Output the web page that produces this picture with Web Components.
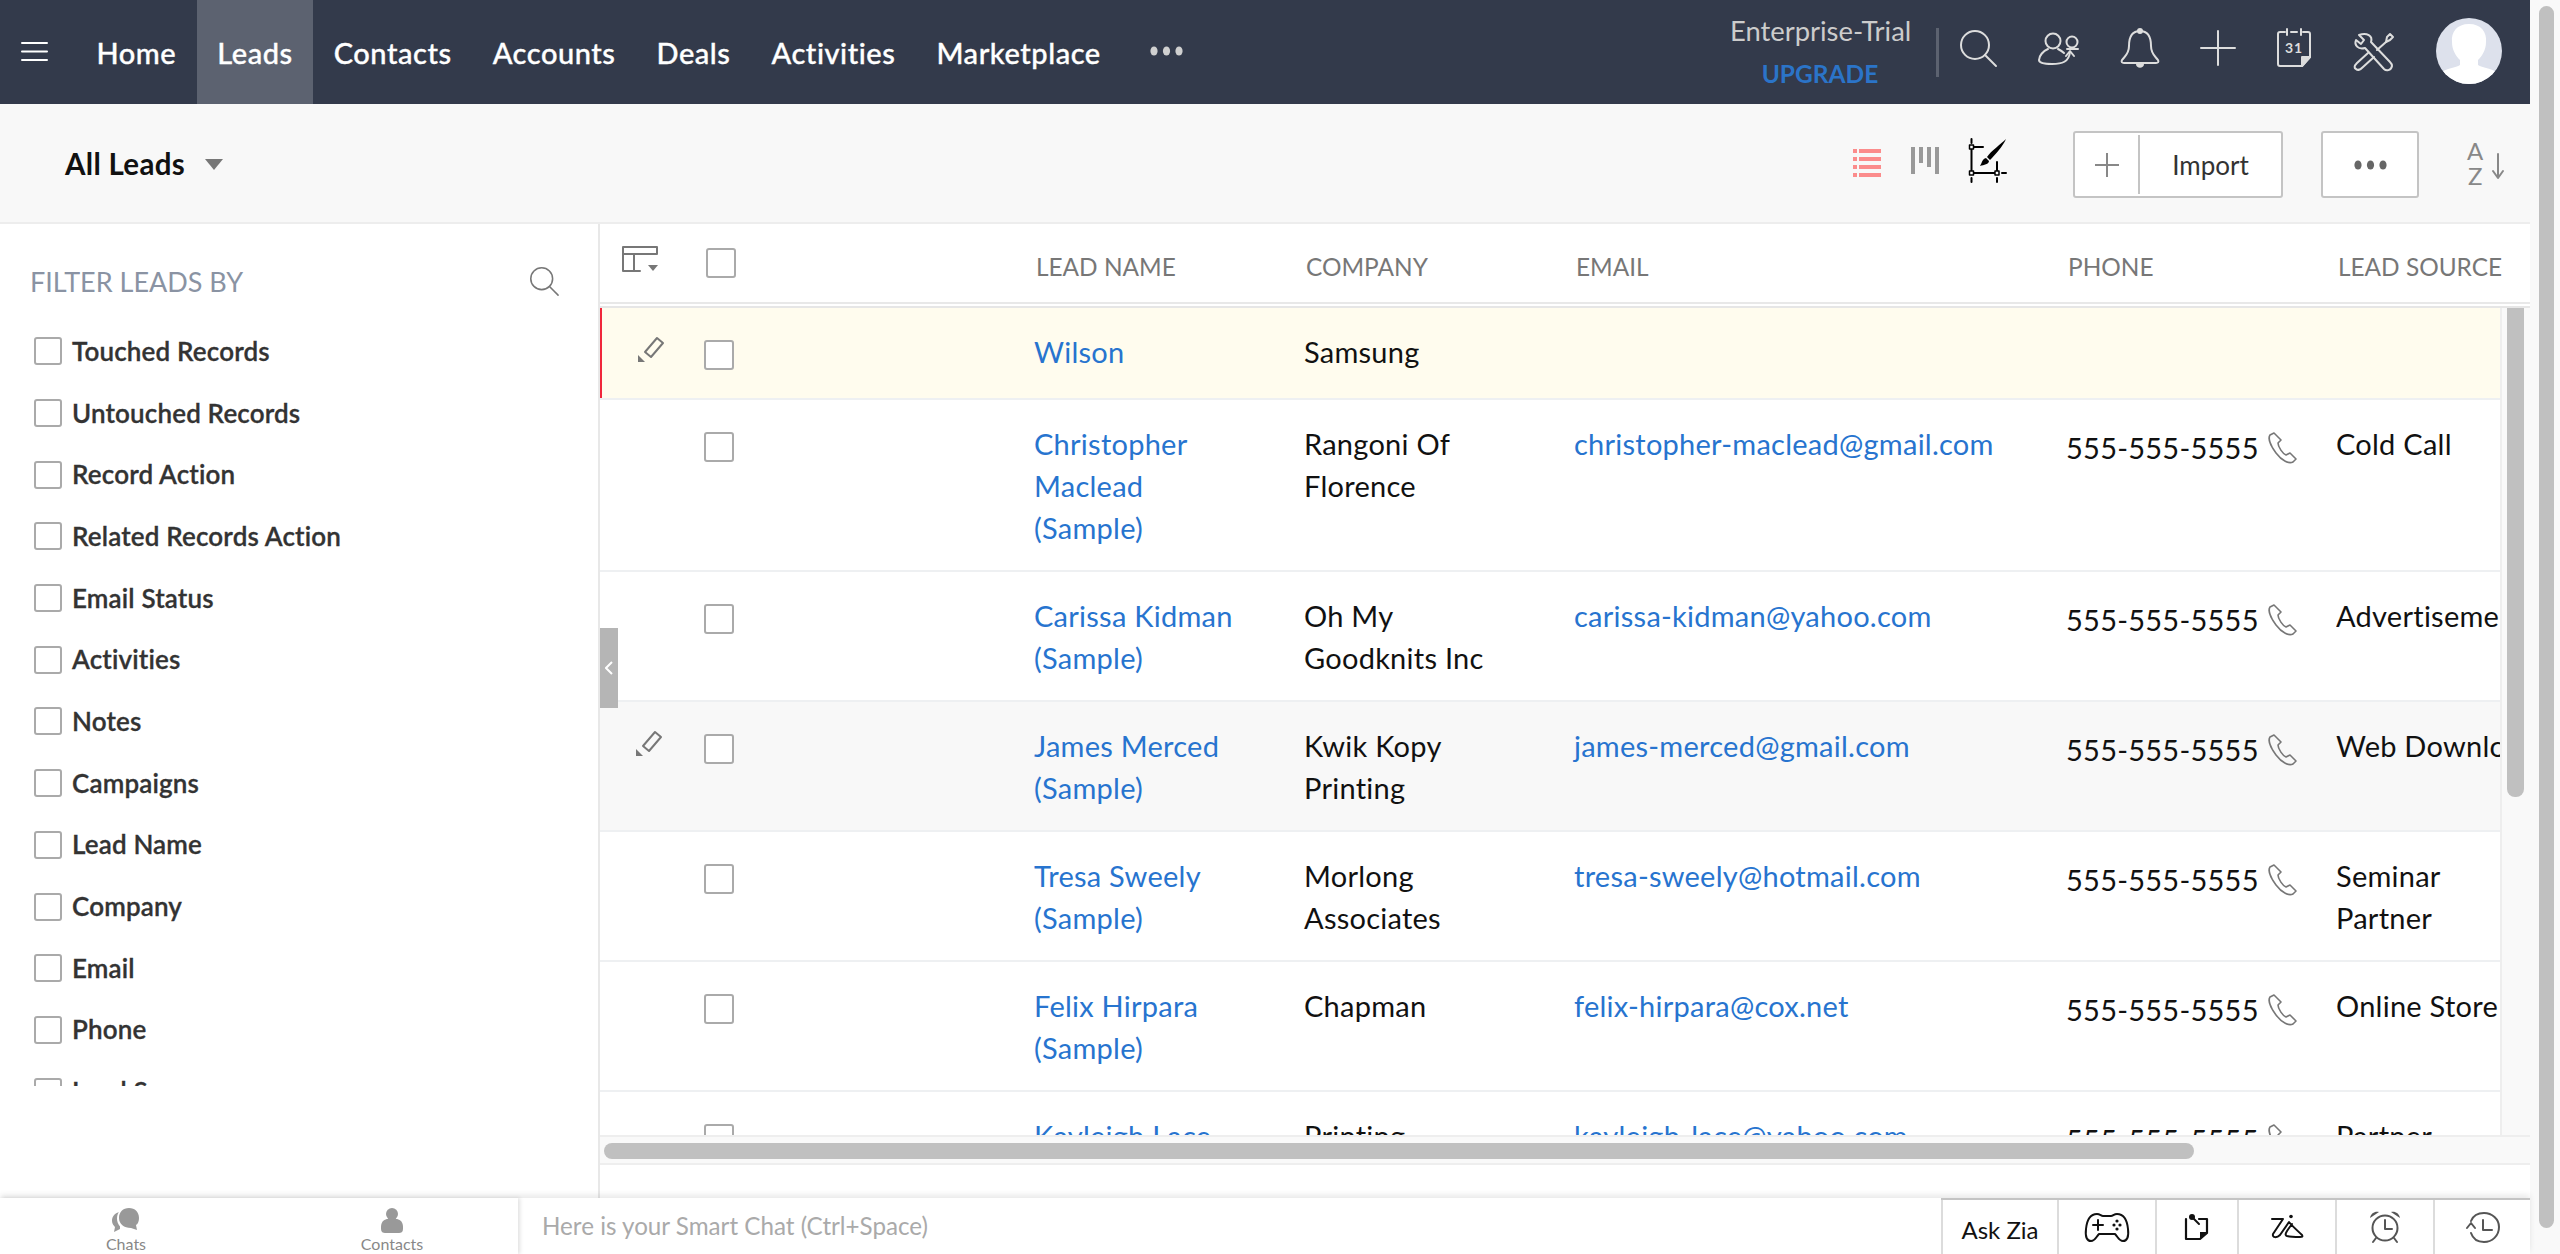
<!DOCTYPE html>
<html>
<head>
<meta charset="utf-8">
<title>Leads</title>
<style>
html, body { margin: 0; height: 100%; overflow: hidden; background: #fff; }
body { font-family: Lato, "Open Sans", sans-serif; color: #111; }
</style>
</head>
<body>
<crm-app>
  <crm-topbar>
    <nav-item>Home</nav-item>
    <nav-item active>Leads</nav-item>
    <nav-item>Contacts</nav-item>
    <nav-item>Accounts</nav-item>
    <nav-item>Deals</nav-item>
    <nav-item>Activities</nav-item>
    <nav-item>Marketplace</nav-item>
  </crm-topbar>
  <crm-toolbar></crm-toolbar>
  <crm-content>
    <crm-filters slot="side">
      <filter-item>Touched Records</filter-item>
      <filter-item>Untouched Records</filter-item>
      <filter-item>Record Action</filter-item>
      <filter-item>Related Records Action</filter-item>
      <filter-item>Email Status</filter-item>
      <filter-item>Activities</filter-item>
      <filter-item>Notes</filter-item>
      <filter-item>Campaigns</filter-item>
      <filter-item>Lead Name</filter-item>
      <filter-item>Company</filter-item>
      <filter-item>Email</filter-item>
      <filter-item>Phone</filter-item>
      <filter-item>Lead Source</filter-item>
    </crm-filters>
    <leads-table slot="main">
      <lead-row current pencil nophone>
        <span slot="name">Wilson</span><span slot="company">Samsung</span>
      </lead-row>
      <lead-row>
        <span slot="name">Christopher<br>Maclead<br>(Sample)</span><span slot="company">Rangoni Of<br>Florence</span>
        <span slot="email">christopher-maclead@gmail.com</span><span slot="source">Cold Call</span>
      </lead-row>
      <lead-row>
        <span slot="name">Carissa Kidman<br>(Sample)</span><span slot="company">Oh My<br>Goodknits Inc</span>
        <span slot="email">carissa-kidman@yahoo.com</span><span slot="source">Advertisement</span>
      </lead-row>
      <lead-row hover pencil>
        <span slot="name">James Merced<br>(Sample)</span><span slot="company">Kwik Kopy<br>Printing</span>
        <span slot="email">james-merced@gmail.com</span><span slot="source">Web Download</span>
      </lead-row>
      <lead-row>
        <span slot="name">Tresa Sweely<br>(Sample)</span><span slot="company">Morlong<br>Associates</span>
        <span slot="email">tresa-sweely@hotmail.com</span><span slot="source">Seminar<br>Partner</span>
      </lead-row>
      <lead-row>
        <span slot="name">Felix Hirpara<br>(Sample)</span><span slot="company">Chapman</span>
        <span slot="email">felix-hirpara@cox.net</span><span slot="source">Online Store</span>
      </lead-row>
      <lead-row>
        <span slot="name">Kayleigh Lace<br>(Sample)</span><span slot="company">Printing<br>Dimensions</span>
        <span slot="email">kayleigh-lace@yahoo.com</span><span slot="source">Partner</span>
      </lead-row>
    </leads-table>
  </crm-content>
  <crm-footer></crm-footer>
</crm-app>

<script>
// all icons sit here, sized in real pixels of the page
const icons = {
  search: [36, 36, '<circle cx="15" cy="15" r="14"/><path d="M25 25 36 36"/>'],
  people: [41, 33, '<circle cx="15" cy="9" r="7.5"/><circle cx="34" cy="10" r="5.5"/><path d="M10 17C5 19 1 24 1 28 1 31 7 32 14 32 24 32 31 30 32 20"/><path d="M28 24 32 19 36 24"/><path d="M20 17C22 18 24 19 26 21M29 17H40"/>'],
  bell: [38, 40, '<path d="M19 3C10 3 8 11 8 18 8 26 4 28 1 32 0 34 1 35 3 35H35C37 35 38 34 37 32 34 28 30 26 30 18 30 11 28 3 19 3Z"/><circle cx="19" cy="3" r="3" fill="currentColor" stroke="none"/><path d="M15 36H23C23 41 15 41 15 36Z" fill="currentColor" stroke="none"/>'],
  plus: [34, 34, '<path d="M17 0V34M0 17H34"/>'],
  calendar: [34, 38, '<path d="M8 3H3Q1 3 1 5V35Q1 37 3 37H25L33 28V5Q33 3 31 3H26"/><path d="M10 0V6M24 0V6M14 3H20"/><path d="M33 28H25V37Z" fill="currentColor"/><text x="17" y="24" text-anchor="middle" font-family="Lato, sans-serif" font-weight="700" font-size="14" letter-spacing="1" fill="currentColor" stroke="none">31</text>'],
  tools: [41, 38, '<path d="M6 2 11 7 8 11 3 7C1 12 5 17 12 15L31 36C33 38 38 38 39 33 39 31 38 30 37 29L18 9C20 3 14-1 6 2Z"/><path d="M15 20 4 30C1 33 1 35 3 36 5 38 7 37 10 34L21 24"/><path d="M24 17 33 9"/><path d="M33 9 34 4 37 1 40 4 37 7Z"/>'],
  list: [28, 28, '<path fill="currentColor" stroke="none" d="M0 0h4v4H0zM6 0h22v4H6zM0 8h4v4H0zM6 8h22v4H6zM0 16h4v4H0zM6 16h22v4H6zM0 24h4v4H0zM6 24h22v4H6z"/>'],
  kanban: [28, 28, '<path fill="currentColor" stroke="none" d="M0 0h4v27H0zM8 0h4v16H8zM16 0h4v20h-4zM24 0h4v27h-4z"/>'],
  brush: [38, 44, '<path stroke-width="2" d="M2.5 8V34H28V23M2.5 8H14M2.5 0V4M2.5 39V43M28 39V43M33 34H37"/><path fill="#fff" stroke-width="1.5" d="M.5 6h4v4h-4zM.5 32h4v4h-4zM26 32h4v4h-4z"/><path fill="currentColor" stroke="none" d="M37 0C32 5 22 12 18 18L21 21C26 16 34 7 37 0ZM17 19C13 20 13 24 11 27 15 26 20 25 20 22Z"/>'],
  az: [38, 44, '<text x="0" y="19" font-family="Lato, sans-serif" font-size="24" fill="currentColor" stroke="none">A</text><text x="1" y="44" font-family="Lato, sans-serif" font-size="24" fill="currentColor" stroke="none">Z</text><path d="M31 13V36M26 30 31 37 36 30"/>'],
  dots: [33, 10, '<g fill="currentColor" stroke="none"><ellipse cx="4" cy="5" rx="3.6" ry="4.6"/><ellipse cx="16.5" cy="5" rx="3.6" ry="4.6"/><ellipse cx="29" cy="5" rx="3.6" ry="4.6"/></g>'],
  burger: [25, 19, '<path d="M0 1H25M0 9.5H25M0 18H25"/>'],
  caret: [18, 11, '<path fill="currentColor" stroke="none" d="M0 0H18L9 11Z"/>'],
  tablecfg: [38, 28, '<path stroke-width="2" d="M1 1H35V8M1 1V25H18M1 8H35M12 8V25"/><path fill="currentColor" stroke="none" d="M26 19H36L31 25Z"/>'],
  pencil: [26, 26, '<path stroke-width="2" d="M7 16 19 2 25 7 13 21Z"/><path fill="currentColor" stroke="none" d="M0 26V19L7 26Z"/>'],
  phone: [30, 31, '<path stroke-width="1.6" d="M6 1 2 3C0 6 2 13 8 21 14 29 21 32 25 30L28 27 22 21 18 23C15 22 10 15 10 11L13 8Z"/>'],
  gamepad: [44, 29, '<path stroke-width="2" d="M12 1C5 1 2 6 1 16 0 24 2 28 6 28 10 28 11 24 14 21H30C33 24 34 28 38 28 42 28 44 24 43 16 42 6 39 1 32 1 29 1 28 3 26 3H18C16 3 15 1 12 1Z"/><path stroke-width="2" d="M13 7V17M8 12H18"/><g fill="currentColor" stroke="none"><circle cx="32" cy="8" r="1.6"/><circle cx="35" cy="12" r="1.6"/><circle cx="29" cy="12" r="1.6"/><circle cx="32" cy="16" r="1.6"/></g>'],
  note: [24, 27, '<path stroke-width="2.2" d="M1 5V25H15L22 19V5H14"/><path fill="currentColor" stroke="none" d="M22 18H15V25Z"/><circle cx="7" cy="3" r="3" fill="currentColor" stroke="none"/><path stroke-width="2" d="M7 3 14 10"/>'],
  zia: [33, 25, '<path stroke-width="2" d="M1 4H12L2 19C1 23 6 23 9 20L18 7C21 11 27 16 31 20 32 22 31 22 29 22 25 22 20 22 16 21 13 20 15 17 21 9"/><circle cx="20" cy="1.5" r="1.8" fill="currentColor" stroke="none"/>'],
  alarm: [32, 32, '<circle cx="16" cy="17" r="12.5" stroke-width="2"/><path stroke-width="2" d="M16 9V18H23M7 27 4 31M25 27 28 31"/><path fill="currentColor" stroke="none" d="M1 7C2 2 6 0 10 1ZM31 7C30 2 26 0 22 1Z"/>'],
  history: [34, 31, '<path stroke-width="2" d="M5 21C7 27 12 30 18 30 26 30 33 24 33 15 33 7 26 1 18 1 12 1 7 4 5 9"/><path stroke-width="2" d="M17 8V18H26M1 16 5 11 9 16"/>'],
  chats: [28, 25, '<path fill="currentColor" stroke="none" d="M8 4C2 5 0 9 0 13 0 16 2 18 3 19L2 24 8 21Z"/><circle cx="17" cy="10.5" r="12" fill="#fff" stroke="none"/><path fill="currentColor" stroke="none" d="M17 0C23 0 27 4 27 10 27 13 26 16 24 17L25 22 19 20C12 20 7 16 7 10 7 4 11 0 17 0Z"/>'],
  contact: [22, 25, '<g fill="currentColor" stroke="none"><circle cx="11" cy="6" r="6"/><path d="M0 19C0 13 4 11 7 11H15C18 11 22 13 22 19V21C22 24 20 25 18 25H4C2 25 0 24 0 21Z"/></g>'],
};

class CrmIcon extends HTMLElement {
  connectedCallback() {
    if (this.shadowRoot) return;
    const [w, h, body] = icons[this.getAttribute('name')];
    const root = this.attachShadow({mode: 'open'});
    root.innerHTML = `<style>:host{display:inline-flex;flex:none}svg{display:block;overflow:visible}</style>
      <svg width="${w}" height="${h}" viewBox="0 0 ${w} ${h}" fill="none" stroke="currentColor" stroke-width="2" stroke-linejoin="round" stroke-linecap="round">${body}</svg>`;
  }
}
customElements.define('crm-icon', CrmIcon);

// helper for the plain shadow-only elements
function shell(name, html) {
  const tmpl = document.createElement('template');
  tmpl.innerHTML = html;
  customElements.define(name, class extends HTMLElement {
    constructor() {
      super();
      this.attachShadow({mode: 'open'}).appendChild(tmpl.content.cloneNode(true));
    }
  });
}

shell('crm-app', `<style>
  :host{display:flex;height:1254px;width:2560px;overflow:hidden}
  .page{width:2530px;display:flex;flex-direction:column;flex:none}
  .track{flex:1;background:#f9f9f9;padding:6px 6px 0 9px}
  .thumb{height:1222px;background:#c0c0c0;border-radius:8px}
</style>
<div class="page"><slot></slot></div>
<div class="track"><div class="thumb"></div></div>`);

shell('crm-topbar', `<style>
  :host{display:flex;flex:none;height:104px;background:#333a4b;color:#fff;align-items:center}
  .burger{width:76px;padding-left:22px;box-sizing:border-box;display:flex;height:100%;align-items:center;color:#fff;padding-bottom:2px}
  .nav{display:flex;height:100%}
  .more{color:#d0d0d0;margin-left:29px;margin-top:-2px}
  .right{margin-left:auto;display:flex;align-items:center;padding-right:28px;color:#ddd}
  .plan{width:180px;text-align:center;font-size:27.4px;line-height:42px;color:#ccc;margin-top:-1px;white-space:nowrap}
  .plan b{display:block;color:#2b74c8;font-weight:700;font-size:24.5px;padding-top:1px;line-height:41px}
  .sep{width:3px;height:49px;background:#5c6270;margin:0 21px 0 26px}
  .m{margin-left:42px}
  .avatar{margin-left:42px;width:66px;height:66px;margin-top:-2px}
  .up{margin-top:-8px}
</style>
<div class="burger"><crm-icon name="burger"></crm-icon></div>
<div class="nav"><slot></slot></div>
<crm-icon class="more" name="dots"></crm-icon>
<div class="right">
  <div class="plan">Enterprise-Trial<b>UPGRADE</b></div>
  <div class="sep"></div>
  <crm-icon class="up" name="search"></crm-icon>
  <crm-icon class="m up" name="people"></crm-icon>
  <crm-icon class="m up" name="bell"></crm-icon>
  <crm-icon class="m up" name="plus"></crm-icon>
  <crm-icon class="m up" name="calendar"></crm-icon>
  <crm-icon class="m" name="tools"></crm-icon>
  <svg class="avatar" viewBox="0 0 66 66"><defs><clipPath id="c"><circle cx="33" cy="33" r="33"/></clipPath></defs>
    <g clip-path="url(#c)"><rect width="66" height="66" fill="#dde1ec"/>
    <path fill="#fff" d="M33 6C21 6 15 14 16 24 16 32 20 38 24 42V47C20 50 10 50 5 55L5 66H61V55C56 50 46 50 42 47V42C46 38 50 32 50 24 51 14 45 6 33 6Z"/></g></svg>
</div>`);

shell('nav-item', `<style>
  :host{display:flex;align-items:center;height:100%;padding:0 20.5px;font-size:29px;font-weight:500;-webkit-text-stroke:.35px #fff;color:#fff;letter-spacing:.55px}
  :host([active]){background:#5c6270}
</style><slot></slot>`);

shell('crm-toolbar', `<style>
  :host{display:flex;flex:none;align-items:center;height:118px;background:#f8f8f8;border-bottom:2px solid #ededed;padding-right:25px}
  .title{margin-left:65px;font-size:29.5px;font-weight:700;letter-spacing:.3px;color:#111;display:flex;align-items:center}
  .title crm-icon{margin-left:20px;color:#777;margin-top:3px}
  .icons{margin-left:auto;display:flex;align-items:center}
  .list{color:#fb8c8c;margin-right:30px}
  .kanban{color:#999;margin-right:30px;margin-top:-4px}
  .brush{color:#000;margin-right:66px;margin-top:-4px}
  .btn{display:flex;align-items:center;height:67px;box-sizing:border-box;background:#fff;border:2px solid #c4c4c4;border-radius:3px;margin-top:3px}
  .plus{width:63px;display:flex;justify-content:center;align-items:center;height:59px;border-right:2px solid #c4c4c4;color:#888}
  .import{width:141px;text-align:center;font-size:26px;color:#333}
  .more{width:98px;justify-content:center;margin-left:38px;color:#666}
  .az{color:#888;margin-left:48px}
</style>
<div class="title">All Leads<crm-icon name="caret"></crm-icon></div>
<div class="icons">
  <crm-icon class="list" name="list"></crm-icon>
  <crm-icon class="kanban" name="kanban"></crm-icon>
  <crm-icon class="brush" name="brush"></crm-icon>
  <div class="btn"><div class="plus"><svg width="24" height="24" viewBox="0 0 24 24" stroke="currentColor" stroke-width="2"><path d="M12 0V24M0 12H24"/></svg></div><div class="import">Import</div></div>
  <div class="btn more"><crm-icon name="dots"></crm-icon></div>
  <crm-icon class="az" name="az"></crm-icon>
</div>`);

shell('crm-content', `<style>
  :host{display:flex;flex:1;min-height:0}
  .side{width:598px;flex:none;border-right:2px solid #e8e8e8}
  .main{flex:1;min-width:0;position:relative}
  .tab{position:absolute;left:0;top:404px;width:18px;height:80px;background:#b5b5b5;color:#fff;display:flex;align-items:center;justify-content:center}
</style>
<div class="side"><slot name="side"></slot></div>
<div class="main"><slot name="main"></slot>
  <div class="tab"><svg width="8" height="14" viewBox="0 0 8 14" fill="none" stroke="currentColor" stroke-width="2"><path d="M7 1 1 7 7 13"/></svg></div>
</div>`);

shell('crm-filters', `<style>
  :host{display:block}
  .head{display:flex;align-items:center;justify-content:space-between;height:96px;padding:18px 40px 0 30px;box-sizing:border-box;font-size:27px;color:#8a93a3}
  .head crm-icon{color:#777;zoom:.78}
  .list{height:766px;overflow:hidden}
</style>
<div class="head">FILTER LEADS BY<crm-icon name="search"></crm-icon></div>
<div class="list"><slot></slot></div>`);

shell('filter-item', `<style>
  :host{display:flex;align-items:center;height:61.7px;padding-left:34px;font-size:26px;letter-spacing:.15px;font-weight:600;-webkit-text-stroke:.3px #333;color:#333}
  i{width:24px;height:24px;border:2px solid #aaa;border-radius:3px;margin-right:10px;flex:none;margin-top:1px}
</style><i></i><slot></slot>`);

shell('leads-table', `<style>
  :host{display:block;--cols:102px 332px 270px 270px 492px 270px 164px;height:100%}
  .head{display:grid;grid-template-columns:var(--cols);height:78px;border-bottom:2px solid #e8e8e8;align-items:center;font-size:24.4px;color:#777;padding-left:2px;margin-bottom:2px}
  .head span{white-space:nowrap;margin-top:6px}
  .cfg{color:#777;margin-left:20px;margin-top:-6px;display:block}
  .head i{display:block;width:26px;height:26px;border:2px solid #aaa;border-radius:3px;margin:0 0 0 2px}
  .rows-wrap{display:flex;height:827px;border-top:2px solid #e6e6e6;border-bottom:2px solid #eee;box-sizing:content-box}
  .rows{flex:none;overflow:hidden;border-right:2px solid #eee;box-sizing:border-box;width:1902px}
  .vtrack{flex:1;background:#f9f9f9;padding-left:5px}
  .vthumb{width:17px;height:489px;background:#c0c0c0;border-radius:0 0 8px 8px}
  .hbar{background:#f9f9f9;border-bottom:2px solid #eee;padding:6px 0 0 4px;box-sizing:content-box;height:20px}
  .hthumb{width:1590px;height:16px;background:#c0c0c0;border-radius:8px}
</style>
<div class="head">
  <crm-icon class="cfg" name="tablecfg"></crm-icon><div><i></i></div>
  <span>LEAD NAME</span><span>COMPANY</span><span>EMAIL</span><span>PHONE</span><span>LEAD SOURCE</span>
</div>
<div class="rows-wrap">
  <div class="rows"><slot></slot></div>
  <div class="vtrack"><div class="vthumb"></div></div>
</div>
<div class="hbar"><div class="hthumb"></div></div>`);

class LeadRow extends HTMLElement {
  connectedCallback() {
    if (this.shadowRoot) return;
    const root = this.attachShadow({mode: 'open'});
    const phone = this.hasAttribute('nophone') ? '' :
      '<span class="num">555-555-5555</span><crm-icon class="call" name="phone"></crm-icon>';
    const pencil = this.hasAttribute('pencil') ? '<crm-icon class="pen" name="pencil"></crm-icon>' : '';
    root.innerHTML = `<style>
      :host{display:grid;grid-template-columns:var(--cols);align-items:start;padding:23px 0 21px;border-bottom:2px solid #eef0f2;font-size:29px;letter-spacing:.25px;line-height:42px;color:#111;white-space:nowrap;overflow:hidden}
      :host([current]){background:#fffcee;padding-bottom:25px;box-shadow:inset 2px 0 0 #f0263c}
      :host([hover]){background:#f8f8f8}
      .pen{color:#777;margin:5px 0 0 36px;display:block}
      :host([current]) .pen{margin-left:38px}
      i{display:block;width:26px;height:26px;border:2px solid #aaa;border-radius:3px;background:#fff;margin:9px 0 0 2px}
      .name{color:#2774cf}
      .email{color:#2774cf}
      .phone{display:flex;align-items:flex-start}
      .num{margin-top:4px}
      .call{color:#777;margin:9px 0 0 9px}
      .source{overflow:hidden}
    </style>
    <div>${pencil}</div><div><i></i></div>
    <div class="name"><slot name="name"></slot></div>
    <div><slot name="company"></slot></div>
    <div class="email"><slot name="email"></slot></div>
    <div class="phone">${phone}</div>
    <div class="source"><slot name="source"></slot></div>`;
  }
}
customElements.define('lead-row', LeadRow);

shell('crm-footer', `<style>
  :host{display:flex;flex:none;height:56px;background:#fff;box-shadow:0 -3px 6px rgba(0,0,0,.09);position:relative}
  .tabs{display:grid;grid-template-columns:252px 252px;column-gap:14px;width:518px;flex:none;box-shadow:2px 0 4px rgba(0,0,0,.12)}
  .tab{display:flex;flex-direction:column;align-items:center;padding-top:10px;font-size:16px;color:#888;line-height:20px}
  .tab crm-icon{color:#999}
  .tab span{margin-top:1px}
  .hint{flex:1;padding-left:24px;font-size:24.2px;color:#aaa;line-height:56px}
  .tools{display:flex;border-top:2px solid #c4c4c4;box-sizing:border-box;width:589px;flex:none;height:56px}
  .tools>div{display:flex;align-items:center;justify-content:center;border-left:2px solid #dcdcdc;box-sizing:border-box;color:#111}
  .zia{width:116px;font-size:24px;color:#333;padding-top:4px}
  .c98{width:98px}.c82{width:82px}.c97{width:97px}
  .alarm,.history{color:#555}
</style>
<div class="tabs">
  <div class="tab"><crm-icon name="chats"></crm-icon><span>Chats</span></div>
  <div class="tab"><crm-icon name="contact"></crm-icon><span>Contacts</span></div>
</div>
<div class="hint">Here is your Smart Chat (Ctrl+Space)</div>
<div class="tools">
  <div class="zia">Ask Zia</div>
  <div class="c98"><crm-icon name="gamepad"></crm-icon></div>
  <div class="c82"><crm-icon name="note"></crm-icon></div>
  <div class="c98"><crm-icon name="zia"></crm-icon></div>
  <div class="c98"><crm-icon class="alarm" name="alarm"></crm-icon></div>
  <div class="c97"><crm-icon class="history" name="history"></crm-icon></div>
</div>`);
</script>
</body>
</html>
